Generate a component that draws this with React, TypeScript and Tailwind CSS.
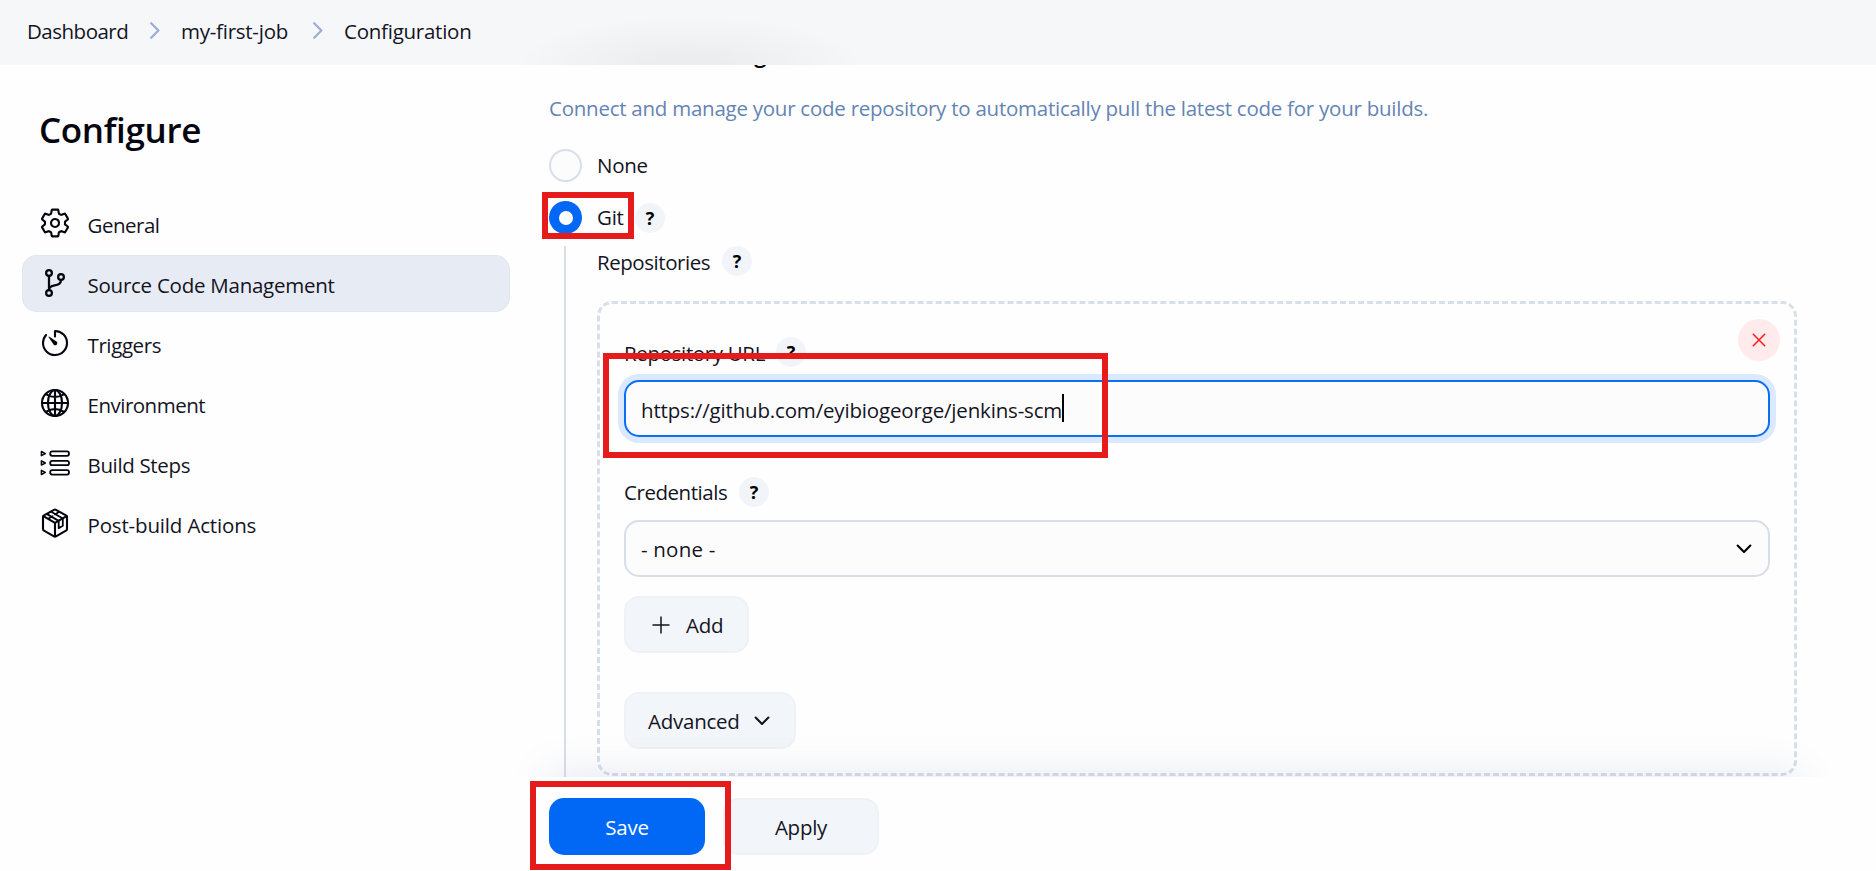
import React from "react";

type IconProps = { className?: string };

const stroke = {
  fill: "none",
  stroke: "currentColor",
  strokeLinecap: "round" as const,
  strokeLinejoin: "round" as const,
};

const GearIcon = ({ className }: IconProps) => (
  <svg viewBox="0 0 512 512" className={className} {...stroke} strokeWidth={34}>
    <path d="M262.29 192.31a64 64 0 1057.4 57.4 64.13 64.13 0 00-57.4-57.4zM416.39 256a154.34 154.34 0 01-1.53 20.79l45.21 35.46a10.81 10.81 0 012.45 13.75l-42.77 74a10.81 10.81 0 01-13.14 4.59l-44.9-18.08a16.11 16.11 0 00-15.17 1.75A164.48 164.48 0 01325 400.8a15.94 15.94 0 00-8.82 12.14l-6.73 47.89a11.08 11.08 0 01-10.68 9.17h-85.54a11.11 11.11 0 01-10.69-8.87l-6.72-47.82a16.07 16.07 0 00-9-12.22 155.3 155.3 0 01-21.46-12.57 16 16 0 00-15.11-1.71l-44.89 18.07a10.81 10.81 0 01-13.14-4.58l-42.77-74a10.8 10.8 0 012.45-13.75l38.21-30a16.05 16.05 0 006-14.08c-.36-4.17-.58-8.33-.58-12.5s.21-8.27.58-12.35a16 16 0 00-6.07-13.94l-38.19-30A10.81 10.81 0 0149.48 186l42.77-74a10.81 10.81 0 0113.14-4.59l44.9 18.08a16.11 16.11 0 0015.17-1.75A164.48 164.48 0 01187 111.2a15.94 15.94 0 008.82-12.14l6.73-47.89A11.08 11.08 0 01213.23 42h85.54a11.11 11.11 0 0110.69 8.87l6.72 47.82a16.07 16.07 0 009 12.22 155.3 155.3 0 0121.46 12.57 16 16 0 0015.11 1.71l44.89-18.07a10.81 10.81 0 0113.14 4.58l42.77 74a10.8 10.8 0 01-2.45 13.75l-38.21 30a16.05 16.05 0 00-6.05 14.08c.33 4.14.55 8.3.55 12.47z" />
  </svg>
);

const BranchIcon = ({ className }: IconProps) => (
  <svg viewBox="0 0 512 512" className={className} {...stroke} strokeWidth={36}>
    <circle cx="160" cy="96" r="46" />
    <circle cx="160" cy="416" r="46" />
    <circle cx="352" cy="160" r="46" />
    <path d="M160 368V144M352 208c0 128-192 48-192 160" />
  </svg>
);

const TimerIcon = ({ className }: IconProps) => (
  <svg viewBox="0 0 512 512" className={className} {...stroke} strokeWidth={34}>
    <path d="M112.91 128A191.85 191.85 0 0064 254c-1.18 106.35 85.65 193.8 192 194 106.2.2 192-85.83 192-192 0-104.54-83.55-189.61-187.5-192a4.36 4.36 0 00-4.5 4.37V152" />
    <path d="M233.38 278.63l-79-113a8.13 8.13 0 0111.32-11.32l113 79a32.5 32.5 0 01-37.25 53.26 33.21 33.21 0 01-8.07-7.94z" fill="currentColor" stroke="none" />
  </svg>
);

const GlobeIcon = ({ className }: IconProps) => (
  <svg viewBox="0 0 512 512" className={className} {...stroke} strokeWidth={34}>
    <circle cx="256" cy="256" r="208" />
    <path d="M256 48c-58.07 0-112.67 93.13-112.67 208S197.93 464 256 464s112.67-93.13 112.67-208S314.07 48 256 48z" />
    <path d="M117.33 117.33c38.24 27.15 86.38 43.34 138.67 43.34s100.43-16.19 138.67-43.34M394.67 394.67c-38.24-27.15-86.38-43.34-138.67-43.34s-100.43 16.19-138.67 43.34M256 48v416M464 256H48" />
  </svg>
);

const StepsIcon = ({ className }: IconProps) => (
  <svg viewBox="0 0 32 32" className={className} {...stroke} strokeWidth={1.8}>
    {[6.6, 16, 25.4].map((y) => (
      <g key={y}>
        <path d={`M2.4 ${y - 2.1}v4.2l3.9-2.1z`} strokeWidth={1.5} />
        <rect x="11.2" y={y - 2.2} width="18.8" height="4.4" rx="2" />
      </g>
    ))}
  </svg>
);

const PackageIcon = ({ className }: IconProps) => (
  <svg viewBox="0 0 32 32" className={className} {...stroke} strokeWidth={2.1}>
    <path d="M28 21.9V10.1a2 2 0 00-1-1.7L17 2.8a2 2 0 00-2 0L5 8.4a2 2 0 00-1 1.7v11.8a2 2 0 001 1.7l10 5.7a2 2 0 002 0l10-5.7a2 2 0 001-1.7z" />
    <path d="M4.4 9.2L16 15.9l11.6-6.7M16 29.3V15.9" />
    <path d="M12.2 4.7L23.8 11.6v7.2l-4.1 2.5v-7.4L8 7.1M9.6 11.6l4-2.4M15.8 7.4l4.2-2.5" strokeWidth={1.8} />
  </svg>
);

const ChevronDown = ({ className }: IconProps) => (
  <svg viewBox="0 0 16 10" className={className} {...stroke} strokeWidth={2.1}>
    <path d="M1.6 1.5L8 7.9l6.4-6.4" />
  </svg>
);

const Crumb = () => (
  <svg viewBox="0 0 10 17" className="h-[17px] w-[10px] text-[#9aaed0]" {...stroke} strokeWidth={2.2}>
    <path d="M1.2 1.2l7.2 7.3-7.2 7.3" />
  </svg>
);

const Help = () => (
  <span className="flex size-[30px] shrink-0 items-center justify-center rounded-full bg-[#f1f5f9] text-[18px] leading-none font-bold text-black">
    ?
  </span>
);

const navItems = [
  { label: "General", Icon: GearIcon, tracking: "tracking-[-0.5px]" },
  { label: "Source Code Management", Icon: BranchIcon, tracking: "tracking-[-0.25px]", active: true },
  { label: "Triggers", Icon: TimerIcon, tracking: "tracking-[-0.4px]" },
  { label: "Environment", Icon: GlobeIcon, tracking: "tracking-[-0.5px]" },
  { label: "Build Steps", Icon: StepsIcon, tracking: "tracking-[-0.35px]" },
  { label: "Post-build Actions", Icon: PackageIcon, tracking: "tracking-[-0.16px]" },
];

export default function App() {
  return (
    <div className="relative flex h-[871px] w-[1876px] flex-col overflow-hidden bg-[#fefefe] font-['Open_Sans','Noto_Sans',sans-serif] text-[20.5px] leading-[28px] tracking-[-0.25px] text-[#14141f]">
      <header className="relative h-[65px] shrink-0 overflow-hidden bg-[#f6f7f9]">
        <div className="absolute top-[16px] left-[515px] h-[100px] w-[350px] bg-[radial-gradient(closest-side,rgba(20,20,30,0.045)_20%,transparent)]" />
        <nav className="relative flex h-full items-center pb-[4px] pl-[27px]">
          <span className="w-[123px] tracking-[-0.5px]">Dashboard</span>
          <Crumb />
          <span className="ml-[21px] w-[132px] tracking-[-0.25px]">my-first-job</span>
          <Crumb />
          <span className="ml-[21px] tracking-[-0.25px]">Configuration</span>
        </nav>
      </header>

      <div className="flex min-h-0 flex-1">
        <aside className="w-[549px] shrink-0 pl-[22px]">
          <h1 className="mt-[40px] pl-[17px] text-[35px] leading-[50px] font-semibold tracking-[-0.35px] text-[#05050f]">
            Configure
          </h1>
          <ul className="mt-[40px] flex w-[488px] flex-col gap-[3px]">
            {navItems.map(({ label, Icon, tracking, active }) => (
              <li
                key={label}
                className={`flex h-[57px] items-center rounded-[15px] pl-[17px] ${active ? "bg-[#e7ebf3] ring-1 ring-[#e2e7ee] ring-inset" : ""}`}
              >
                <Icon className="mb-px size-[32px] text-[#05050f]" />
                <span className={`ml-[16.5px] pt-[2px] ${tracking}`}>{label}</span>
              </li>
            ))}
          </ul>
        </aside>

        <main className="flex w-[1248px] shrink-0 flex-col">
          <section className="relative h-[712px] shrink-0">
            <div className="h-full [clip-path:inset(0_-80px)]">
              <div className="flex flex-col">
                <h2 className="-mt-[28px] h-[32px] text-[23px] leading-[32px] font-semibold tracking-[-0.1px] text-[#05050f]">
                  Source Code Management
                </h2>
                <p className="mt-[24px] h-[30px] leading-[30px] text-[#6484b4]">
                  Connect and manage your code repository to automatically pull the latest code for your builds.
                </p>
                <label className="mt-[26px] flex h-[33px] items-center">
                  <span className="size-[33px] rounded-full border-2 border-[#d9dfea] bg-[#fcfcfd]" />
                  <span className="ml-[15px] pb-[2px]">None</span>
                </label>
                <label className="mt-[19px] flex h-[33px] items-center">
                  <span className="flex size-[33px] items-center justify-center rounded-full bg-[#0068f5]">
                    <span className="size-[14px] rounded-full bg-white" />
                  </span>
                  <span className="ml-[15px] w-[38px] pb-[2px]">Git</span>
                  <Help />
                </label>

                <div className="mt-[12px] ml-[15px] h-[540px] border-l-2 border-[#d7deea] pl-[31px]">
                  <div className="flex h-[30px] items-center">
                    <span className="w-[125px] pt-[2px] tracking-[-0.45px]">Repositories</span>
                    <Help />
                  </div>

                  <div className="relative mt-[25px] flex h-[475px] w-[1200px] flex-col items-start rounded-[15px] border-3 border-dashed border-[#d7dfe9] px-[24px] pt-[33px]">
                    <button className="absolute top-[15px] right-[14px] flex size-[42px] items-center justify-center rounded-full bg-[#ffebeb] text-[#ff1f1f]">
                      <svg viewBox="0 0 14 14" className="size-[14px]" {...stroke} strokeWidth={1.6}>
                        <path d="M1.3 1.3l11.4 11.4M12.7 1.3L1.3 12.7" />
                      </svg>
                    </button>

                    <div className="flex h-[30px] items-center">
                      <span className="w-[152px] pt-[2px] tracking-[-0.35px]">Repository URL</span>
                      <Help />
                    </div>
                    <div className="mt-[13px] flex h-[57px] w-[1146px] items-center rounded-[15px] border-2 border-[#0b6ff5] bg-[#fcfcfd] pt-[2px] pl-[15px] shadow-[0_0_0_6px_#dbe9fe]">
                      <span className="tracking-[-0.17px]">https://github.com/eyibiogeorge/jenkins-scm</span>
                      <span className="-mt-[4px] h-[28px] w-[2px] bg-black" />
                    </div>

                    <div className="mt-[40px] flex h-[30px] items-center">
                      <span className="w-[115px] pb-px tracking-[-0.45px]">Credentials</span>
                      <Help />
                    </div>
                    <div className="mt-[13px] flex h-[57px] w-[1146px] items-center justify-between rounded-[15px] border-2 border-[#d7deea] bg-[#fcfcfd] pr-[16px] pl-[15px]">
                      <span className="tracking-[0.2px]">- none -</span>
                      <ChevronDown className="h-[10px] w-[16px] text-black" />
                    </div>

                    <button className="mt-[19px] flex h-[57px] w-[125px] items-center rounded-[15px] border-2 border-[#eef2f5] bg-[#f2f5f9] pl-[26px]">
                      <svg viewBox="0 0 18 18" className="size-[18px]" {...stroke} strokeLinecap="butt" strokeWidth={1.5}>
                        <path d="M9 .5v17M.5 9h17" />
                      </svg>
                      <span className="ml-[16px]">Add</span>
                    </button>

                    <button className="mt-[39px] flex h-[57px] w-[172px] items-center rounded-[15px] border-2 border-[#eef2f5] bg-[#f2f5f9] pl-[22px]">
                      <span className="w-[106px] text-left">Advanced</span>
                      <ChevronDown className="h-[10px] w-[16px]" />
                    </button>
                  </div>
                </div>
              </div>
              <div className="absolute top-[712px] left-0 h-[120px] w-full shadow-[0_0_42px_rgba(110,130,175,0.19)]" />
            </div>
          </section>

          <footer className="flex flex-1 items-start gap-[18px] pt-[21px]">
            <button className="h-[57px] w-[156px] rounded-[15px] bg-[#0068f5] text-white">Save</button>
            <button className="h-[57px] w-[156px] rounded-[15px] border-2 border-[#eef2f5] bg-[#f2f5f9]">Apply</button>
          </footer>
        </main>
      </div>

      <div className="absolute top-[192px] left-[542px] h-[47px] w-[92px] border-6 border-[#e61c1c]" />
      <div className="absolute top-[353px] left-[603px] h-[105px] w-[505px] border-6 border-[#e61c1c]" />
      <div className="absolute top-[781px] left-[530px] h-[89px] w-[201px] border-6 border-[#e61c1c]" />
    </div>
  );
}
